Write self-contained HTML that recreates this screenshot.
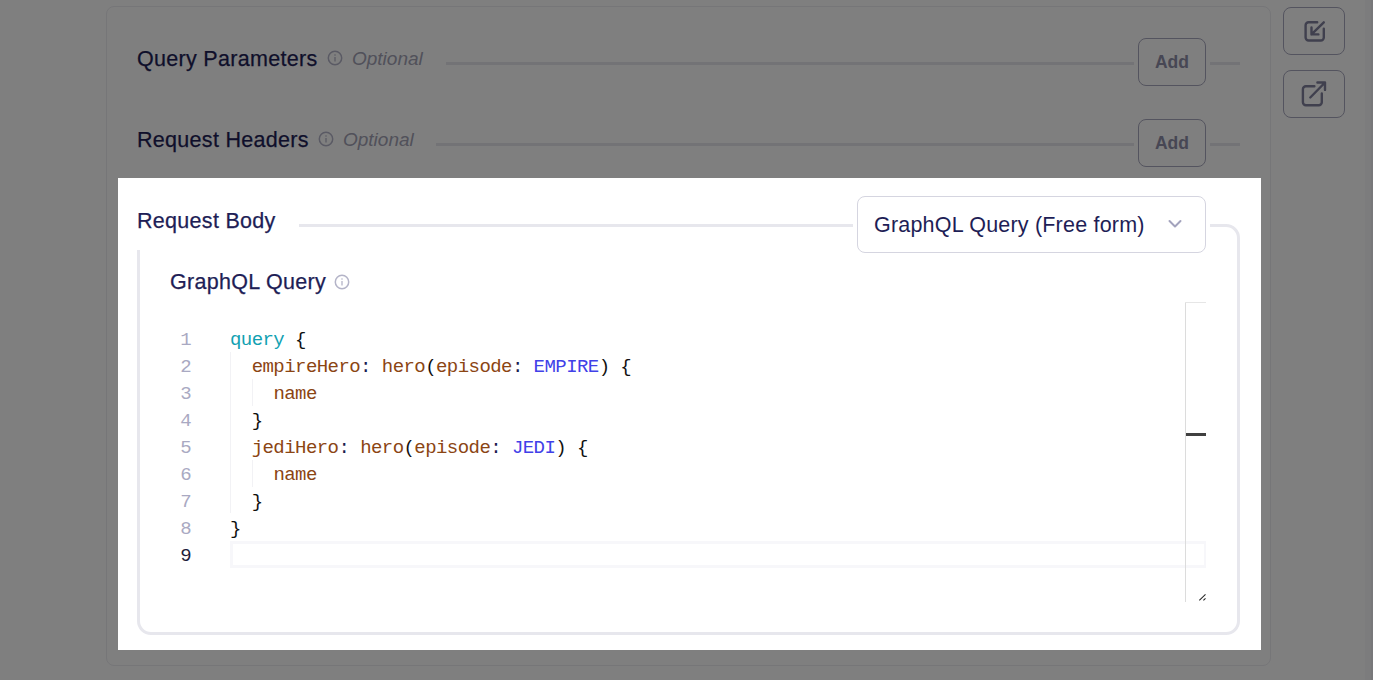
<!DOCTYPE html>
<html><head><meta charset="utf-8">
<style>
*{box-sizing:border-box;margin:0;padding:0}
html,body{width:1373px;height:680px;overflow:hidden;background:#fff;position:relative;font-family:"Liberation Sans",sans-serif}
.a{position:absolute}
.card{left:106px;top:6px;width:1165px;height:660px;border:1px solid #ececf1;border-radius:8px}
.h{font-size:21.5px;color:#1e1e56;white-space:nowrap;letter-spacing:0.3px;line-height:1;-webkit-text-stroke:0.25px #1e1e56}
.opt{font-size:19px;font-style:italic;color:#a2a2b5;white-space:nowrap;line-height:1}
.line{height:3px;background:#e7e7ed}
.btn{border:1px solid #a9a9be;border-radius:8px;width:68px;height:48px;background:#fff}
.btn span{position:absolute;left:0;right:0;top:15px;text-align:center;font-weight:bold;font-size:17.5px;color:#8e8ea8;line-height:1}
.ib{border:1px solid #a9a9be;border-radius:8px;width:62px;height:48px;background:#fff}
.mono{font-family:"Liberation Mono",monospace;font-size:19px;letter-spacing:-0.56px;white-space:pre;line-height:27px}
.ln{color:#a9a9c2;text-align:right;width:30px}
.k{color:#11a1b2}.p{color:#8b4513}.e{color:#4141e8}.c{color:#1c1c50}.b{color:#111}
.overlay{left:118px;top:178px;width:1143px;height:472px;box-shadow:0 0 0 3000px rgba(0,0,0,.5);pointer-events:none}
</style></head><body>
<!-- background page -->
<div class="a card"></div>

<!-- Query Parameters -->
<div class="a h" style="left:137px;top:49px">Query Parameters</div>
<svg class="a" style="left:327px;top:50px" width="16" height="16" viewBox="0 0 16 16"><circle cx="8" cy="8" r="6.7" fill="none" stroke="#b4b4c8" stroke-width="1.5"/><rect x="7.35" y="7" width="1.3" height="4.5" fill="#b4b4c8"/><circle cx="8" cy="5" r="0.8" fill="#b4b4c8"/></svg>
<div class="a opt" style="left:352px;top:49px">Optional</div>
<div class="a line" style="left:446px;top:62px;width:688px"></div>
<div class="a btn" style="left:1138px;top:38px"><span>Add</span></div>
<div class="a line" style="left:1210px;top:62px;width:30px"></div>

<!-- Request Headers -->
<div class="a h" style="left:137px;top:130px">Request Headers</div>
<svg class="a" style="left:318px;top:131px" width="16" height="16" viewBox="0 0 16 16"><circle cx="8" cy="8" r="6.7" fill="none" stroke="#b4b4c8" stroke-width="1.5"/><rect x="7.35" y="7" width="1.3" height="4.5" fill="#b4b4c8"/><circle cx="8" cy="5" r="0.8" fill="#b4b4c8"/></svg>
<div class="a opt" style="left:343px;top:130px">Optional</div>
<div class="a line" style="left:436px;top:143px;width:698px"></div>
<div class="a btn" style="left:1138px;top:119px"><span>Add</span></div>
<div class="a line" style="left:1210px;top:143px;width:30px"></div>

<!-- right icon buttons -->
<div class="a ib" style="left:1283px;top:7px"></div>
<svg class="a" style="left:1295px;top:12px" width="40" height="40" viewBox="0 0 40 40" fill="none" stroke="#80809c" stroke-width="2.4" stroke-linecap="round" stroke-linejoin="round"><path d="M22.2 10.3H13.6a3 3 0 0 0-3 3V25.5a3 3 0 0 0 3 3H25.8a3 3 0 0 0 3-3V16.8"/><path d="M28.8 10.3L16.5 22.4M16.5 15.4V22.4H23.4"/></svg>
<div class="a ib" style="left:1283px;top:70px"></div>
<svg class="a" style="left:1295px;top:74px" width="40" height="40" viewBox="0 0 40 40" fill="none" stroke="#80809c" stroke-width="2.4" stroke-linecap="round" stroke-linejoin="round"><path d="M19.4 12.3H10.9a3 3 0 0 0-3 3V28.2a3 3 0 0 0 3 3H23.8a3 3 0 0 0 3-3V19.4"/><path d="M15.3 23.5L30 8.5M22.4 8.5H30V15.9"/></svg>
<div class="a" style="left:1365px;top:0;width:8px;height:680px;background:#f8f8fb"></div><div class="a" style="left:1371px;top:0;width:2px;height:680px;background:#f0f0f4"></div>

<!-- highlighted region -->
<div class="a" style="left:118px;top:178px;width:1143px;height:472px;background:#fff"></div>
<div class="a" style="left:137px;top:224px;width:1103px;height:411px;border:3px solid #e7e7ed;border-radius:14px"></div>
<div class="a" style="left:118px;top:190px;width:181px;height:60px;background:#fff"></div>
<div class="a h" style="left:137px;top:211px">Request Body</div>
<div class="a" style="left:853px;top:194px;width:357px;height:62px;background:#fff"></div>
<div class="a" style="left:857px;top:196px;width:349px;height:57px;border:1px solid #d5d5e0;border-radius:8px;background:#fff"></div>
<div class="a h" style="left:874px;top:215px;letter-spacing:0.2px;-webkit-text-stroke:0">GraphQL Query (Free form)</div>
<svg class="a" style="left:1166px;top:217px" width="18" height="14" viewBox="0 0 18 14"><path d="M3.5 4l5.5 5.5L14.5 4" fill="none" stroke="#a3a3bd" stroke-width="2" stroke-linecap="round" stroke-linejoin="round"/></svg>

<div class="a h" style="left:170px;top:272px">GraphQL Query</div>
<svg class="a" style="left:334px;top:274px" width="16" height="16" viewBox="0 0 16 16"><circle cx="8" cy="8" r="6.7" fill="none" stroke="#b4b4c8" stroke-width="1.5"/><rect x="7.35" y="7" width="1.3" height="4.5" fill="#b4b4c8"/><circle cx="8" cy="5" r="0.8" fill="#b4b4c8"/></svg>

<!-- editor -->
<div class="a" style="left:230px;top:352px;width:1px;height:161px;background:#f2f2f5"></div>
<div class="a" style="left:252px;top:379px;width:1px;height:27px;background:#f2f2f5"></div>
<div class="a" style="left:252px;top:460px;width:1px;height:27px;background:#f2f2f5"></div>
<div class="a" style="left:230px;top:541px;width:976px;height:27px;border:3px solid #f7f7fa;border-right-width:2px"></div>
<div class="a mono ln" style="left:161px;top:327px">1
2
3
4
5
6
7
8
<span style="color:#1e1e3c">9</span></div>
<div class="a mono" style="left:230px;top:327px"><span class="k">query</span> <span class="b">{</span>
  <span class="p">empireHero</span><span class="c">:</span> <span class="p">hero</span><span class="b">(</span><span class="p">episode</span><span class="c">:</span> <span class="e">EMPIRE</span><span class="b">)</span> <span class="b">{</span>
    <span class="p">name</span>
  <span class="b">}</span>
  <span class="p">jediHero</span><span class="c">:</span> <span class="p">hero</span><span class="b">(</span><span class="p">episode</span><span class="c">:</span> <span class="e">JEDI</span><span class="b">)</span> <span class="b">{</span>
    <span class="p">name</span>
  <span class="b">}</span>
<span class="b">}</span>
</div>
<div class="a" style="left:1185px;top:302px;width:1px;height:300px;background:#dcdcdc"></div>
<div class="a" style="left:1185px;top:302px;width:21px;height:1px;background:#e6e6e6"></div>
<div class="a" style="left:1186px;top:433px;width:20px;height:3px;background:#404040"></div>
<svg class="a" style="left:1197px;top:591px" width="11" height="12" viewBox="0 0 11 12"><path d="M2.3 9.4L8.5 3.4M6.4 9.4L8.5 7.3" stroke="#2a2a2a" stroke-width="1.1" fill="none"/></svg>

<div class="a overlay"></div>
</body></html>
